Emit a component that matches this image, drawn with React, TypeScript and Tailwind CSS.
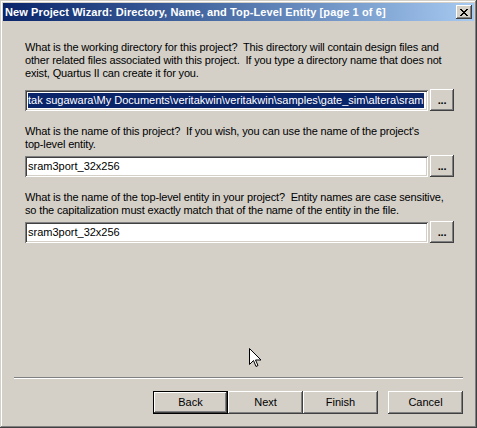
import React from 'react';

const raised = 'shadow-[inset_-1px_-1px_#404040,inset_1px_1px_#ffffff,inset_-2px_-2px_#808080,inset_2px_2px_#d4d0c8]';
const sunken = 'shadow-[inset_1px_1px_#808080,inset_-1px_-1px_#ffffff,inset_2px_2px_#404040,inset_-2px_-2px_#d4d0c8]';

function BrowseButton() {
    return (
        <button className={`w-[24px] h-[22px] bg-[#d4d0c8] ${raised} flex items-end justify-center pb-[5px] text-[11px] font-bold leading-none text-black`}>
            ...
        </button>
    );
}

function PathRow({ value, selected }: { value: string; selected?: boolean }) {
    return (
        <div className="flex items-center gap-[2px]">
            <div className={`w-[403px] h-[21px] bg-white ${sunken} flex items-center px-[3px] overflow-hidden tracking-normal`}>
                {selected ? (
                    <span className="bg-[#0a246a] text-white whitespace-nowrap leading-[15px]">{value}</span>
                ) : (
                    <span className="text-black whitespace-nowrap leading-[15px]">{value}</span>
                )}
            </div>
            <BrowseButton />
        </div>
    );
}

function WizButton({ label, isDefault }: { label: string; isDefault?: boolean }) {
    return (
        <button className={`w-[75px] h-[23px] bg-[#d4d0c8] text-black text-[11px] ${isDefault ? 'border border-black' : ''}`}>
            <div className={`w-full h-full flex items-center justify-center ${raised}`}>{label}</div>
        </button>
    );
}

export default function App() {
    return (
        <div className="w-[477px] h-[428px] bg-[#d4d0c8] relative overflow-hidden text-[11px] text-black font-['Liberation_Sans',Arial,sans-serif] shadow-[inset_-1px_-1px_#404040,inset_1px_1px_#d4d0c8,inset_-2px_-2px_#808080,inset_2px_2px_#ffffff] p-[3px] flex flex-col">
            <div className="h-[18px] bg-gradient-to-r from-[#0a246a] to-[#a6caf0] flex items-center justify-between pl-[2px] pr-[2px]">
                <span className="text-white font-bold text-[11px] whitespace-nowrap tracking-[0.1px]">New Project Wizard: Directory, Name, and Top-Level Entity [page 1 of 6]</span>
                <button className={`w-[16px] h-[14px] bg-[#d4d0c8] ${raised} flex items-center justify-center`}>
                    <svg width="8" height="7" viewBox="0 0 8 7">
                        <path d="M0 0h2v1h1v1h2V1h1V0h2v1H7v1H6v1H5v1h1v1h1v1h1v1H6V6H5V5H3v1H2v1H0V6h1V5h1V4h1V3H2V2H1V1H0z" fill="#000" />
                    </svg>
                </button>
            </div>

            <div className="pl-[22px] pt-[20px] flex flex-col tracking-[-0.15px]">
                <p className="leading-[13px] whitespace-nowrap">
                    What is the working directory for this project?&nbsp; This directory will contain design files and<br />
                    other related files associated with this project.&nbsp; If you type a directory name that does not<br />
                    exist, Quartus II can create it for you.
                </p>
                <div className="mt-[9px]">
                    <PathRow value="tak sugawara\My Documents\veritakwin\veritakwin\samples\gate_sim\altera\sram" selected />
                </div>

                <p className="leading-[13px] whitespace-nowrap mt-[14px]">
                    What is the name of this project?&nbsp; If you wish, you can use the name of the project's<br />
                    top-level entity.
                </p>
                <div className="mt-[4px]">
                    <PathRow value="sram3port_32x256" />
                </div>

                <p className="leading-[13px] whitespace-nowrap mt-[14px]">
                    What is the name of the top-level entity in your project?&nbsp; Entity names are case sensitive,<br />
                    so the capitalization must exactly match that of the name of the entity in the file.
                </p>
                <div className="mt-[4px]">
                    <PathRow value="sram3port_32x256" />
                </div>
            </div>

            <div className="flex-1" />

            <div className="ml-[11px] mr-[11px] h-[2px] border-t border-[#808080] border-b border-b-white" />

            <div className="flex justify-end pr-[11px] pt-[12px] pb-[11px]">
                <WizButton label="Back" isDefault />
                <WizButton label="Next" />
                <WizButton label="Finish" />
                <div className="w-[10px]" />
                <WizButton label="Cancel" />
            </div>

            <svg className="absolute left-[249px] top-[348px]" width="12" height="20" viewBox="0 0 12 20">
                <path d="M0.5 0.5v16l4-4 2.5 6 2-1-2.5-5.5h5.5z" fill="#fff" stroke="#000" strokeWidth="1" />
            </svg>
        </div>
    );
}
